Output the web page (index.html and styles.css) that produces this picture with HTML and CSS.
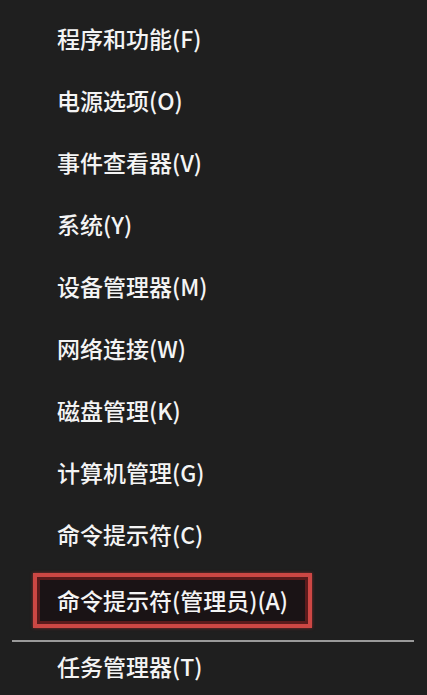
FILE: index.html
```html
<!DOCTYPE html>
<html lang="zh-CN">
<head>
<meta charset="utf-8">
<link rel="stylesheet" href="styles.css">
</head>
<body>
<div class="menu">
  <div class="item">程序和功能(F)</div>
  <div class="item">电源选项(O)</div>
  <div class="item">事件查看器(V)</div>
  <div class="item">系统(Y)</div>
  <div class="item">设备管理器(M)</div>
  <div class="item">网络连接(W)</div>
  <div class="item">磁盘管理(K)</div>
  <div class="item">计算机管理(G)</div>
  <div class="item">命令提示符(C)</div>
  <div class="item item-boxed"><div class="box">命令提示符(管理员)(A)</div></div>
  <div class="divider"></div>
  <div class="item item-last">任务管理器(T)</div>
</div>
</body>
</html>
```
FILE: styles.css
```css
html, body {
  margin: 0;
  padding: 0;
  background: #1f1f1f;
}
body {
  width: 427px;
  height: 695px;
  overflow: hidden;
  font-family: "Noto Sans CJK SC", "Noto Sans", sans-serif;
  color: #f4f4f4;
}
.menu {
  display: flex;
  flex-direction: column;
  padding-top: 7px;
}
.item {
  height: 62px;
  display: flex;
  align-items: center;
  padding-left: 57px;
  font-size: 23px;
  font-weight: 500;
  line-height: 1;
  white-space: nowrap;
}
.item-boxed {
  padding-left: 33px;
  align-items: flex-start;
  padding-top: 8px;
  box-sizing: border-box;
}
.box {
  width: 279px;
  height: 55px;
  box-sizing: border-box;
  border: 4px solid #cc4744;
  box-shadow: inset 0 0 0 3px #5a1b1c, 0 0 3px #8a2a2a;
  background: #1a1315;
  display: flex;
  align-items: center;
  padding-left: 20px;
}
.divider {
  height: 2px;
  margin: 13px 13px 0 12px;
  background: #9a9a9a;
}
.item-last {
  height: 48px;
}
```
